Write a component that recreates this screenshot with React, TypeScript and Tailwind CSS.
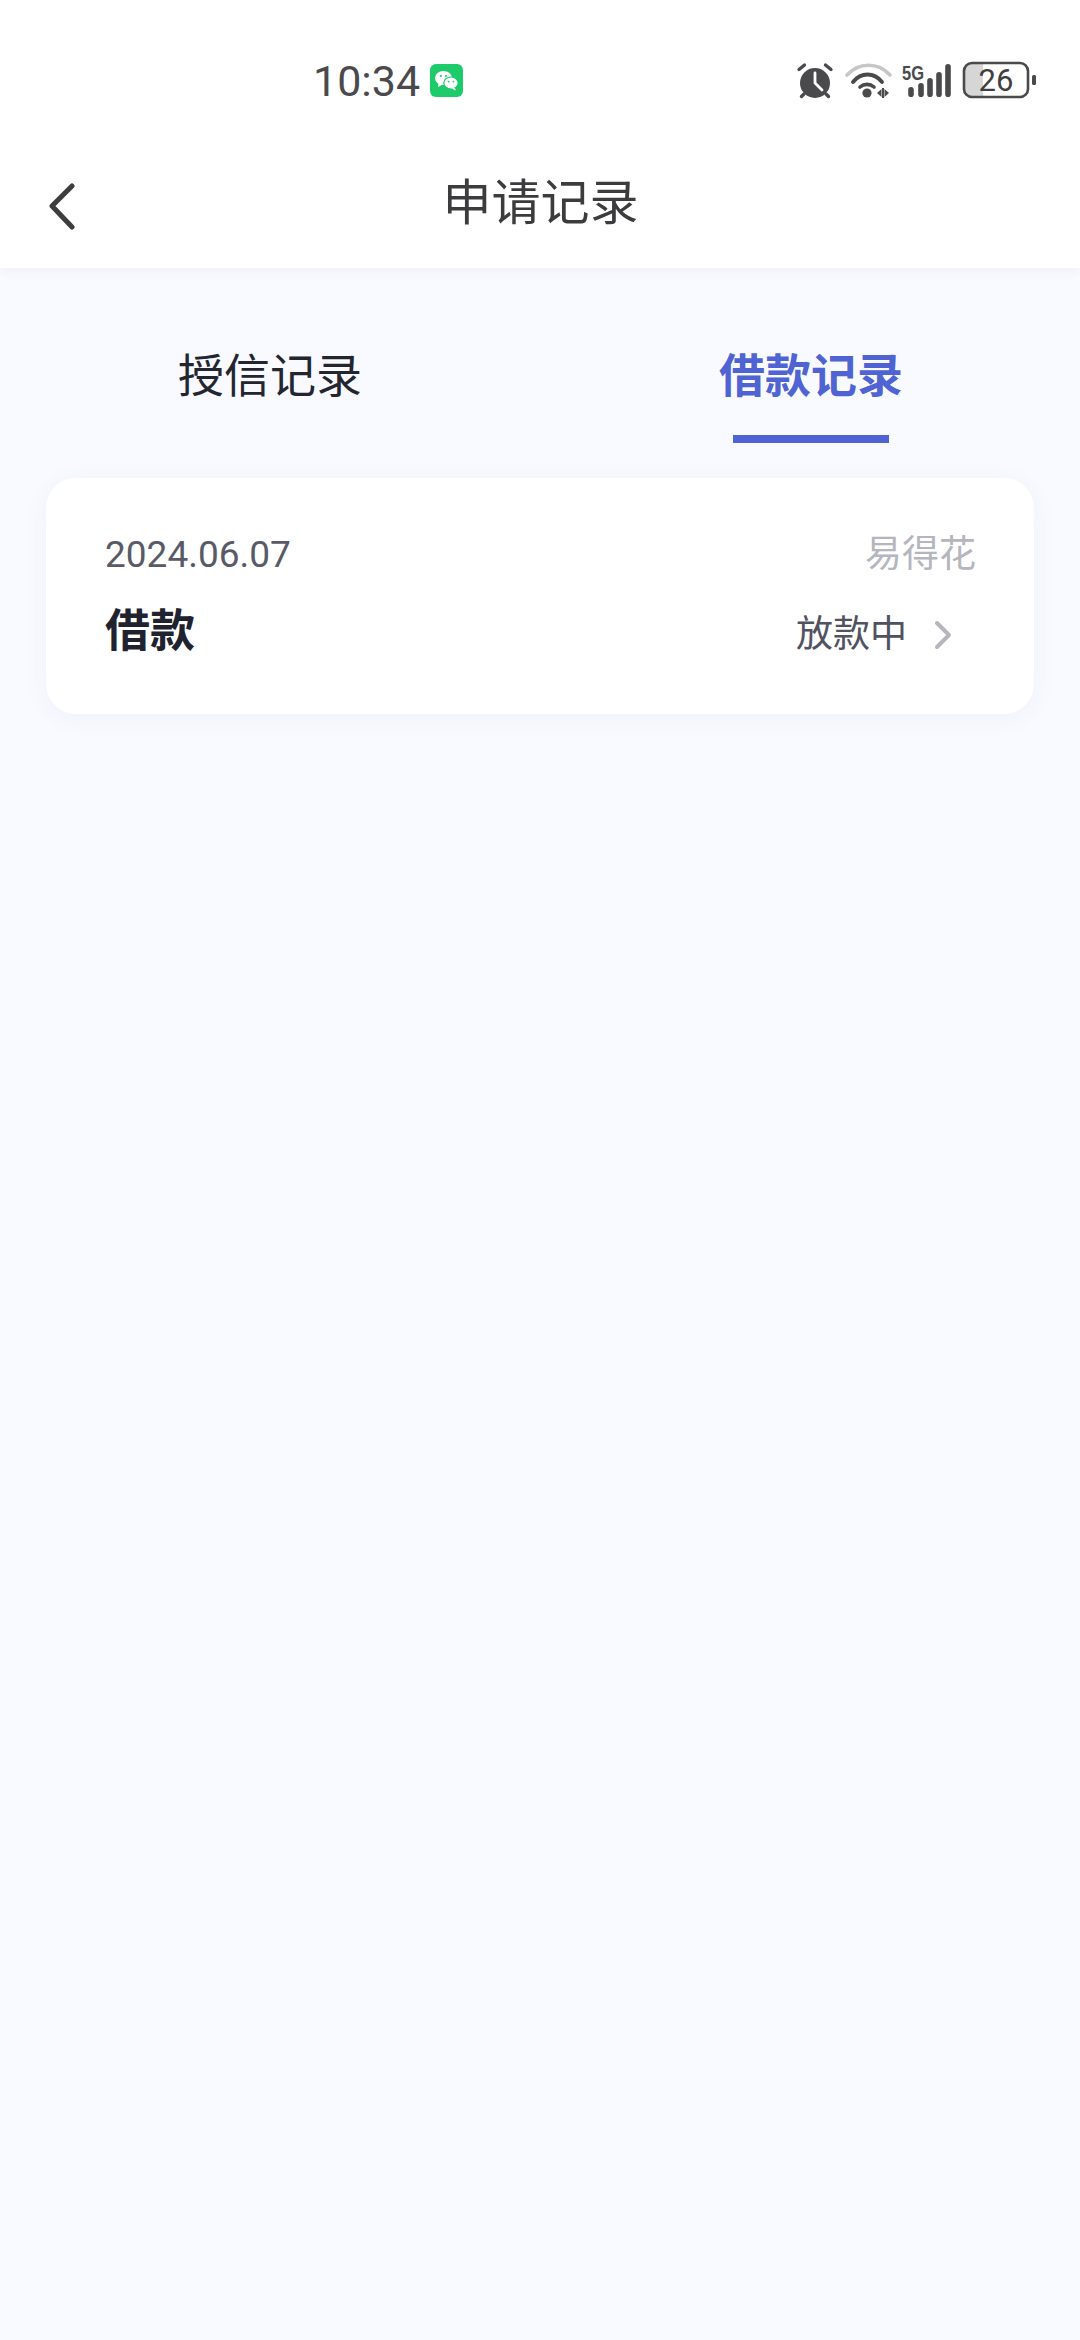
const cjk = "font-['Roboto','Noto_Sans_CJK_SC',sans-serif]";

function WeChat() {
  return (
    <svg width="33" height="33" viewBox="0 0 33 33" className="ml-[10px]">
      <rect width="33" height="33" rx="6" fill="#1ECB6B" />
      <ellipse cx="13.5" cy="14" rx="8.5" ry="7" fill="#fff" />
      <path d="M8.5 18.5 L8 23 L12.5 20.5Z" fill="#fff" />
      <ellipse cx="21" cy="19" rx="7.2" ry="6" fill="#fff" stroke="#1ECB6B" strokeWidth="1.2" />
      <path d="M24.5 23.5 L26 26.5 L21.5 24.5Z" fill="#fff" />
      <circle cx="10.8" cy="12" r="1.1" fill="#1ECB6B" />
      <circle cx="16" cy="12" r="1.1" fill="#1ECB6B" />
      <circle cx="18.6" cy="17.6" r="0.9" fill="#1ECB6B" />
      <circle cx="23.4" cy="17.6" r="0.9" fill="#1ECB6B" />
    </svg>
  );
}

function StatusIcons() {
  return (
    <svg width="244" height="44" viewBox="0 0 244 44" className="ml-auto">
      {/* alarm */}
      <circle cx="22" cy="25" r="15" fill="#4a4a4c" />
      <path d="M6 11.5 L11.5 7 M38 11.5 L32.5 7 M11 36 L8.5 38.5 M33 36 L35.5 38.5" stroke="#4a4a4c" strokeWidth="3.4" fill="none" strokeLinecap="round" />
      <path d="M22 15 V25 L29 32" stroke="#fff" strokeWidth="2.8" fill="none" strokeLinecap="round" strokeLinejoin="round" />
      {/* wifi */}
      <path d="M54 17 C66 4 85 4 97 17" stroke="#c6c6c7" strokeWidth="3.6" fill="none" strokeLinecap="round" />
      <path d="M60 24 C68 14 81 14 89 24" stroke="#4a4a4c" strokeWidth="3.8" fill="none" strokeLinecap="round" />
      <path d="M67 29 C71 25.5 77 25.5 81 29" stroke="#4a4a4c" strokeWidth="3.6" fill="none" strokeLinecap="round" />
      <circle cx="74" cy="35" r="4.6" fill="#4a4a4c" />
      <path d="M84 35 L88.5 31 V39Z M91.5 31 L96 35 L91.5 39Z" fill="#4a4a4c" />
      <rect x="89" y="30" width="2" height="10" fill="#4a4a4c" />
      {/* 5G */}
      <text x="109" y="22" fontFamily="'Liberation Sans',sans-serif" fontWeight="700" fontSize="20" fill="#4a4a4c" textLength="22" lengthAdjust="spacingAndGlyphs">5G</text>
      {/* signal */}
      <g fill="#4a4a4c">
        <rect x="115.2" y="29" width="5.6" height="10" rx="2.8" />
        <rect x="125.2" y="25" width="5.6" height="14" rx="2.8" />
        <rect x="134.2" y="20" width="5.6" height="19" rx="2.8" />
        <rect x="143.2" y="14" width="5.6" height="25" rx="2.8" />
        <rect x="152.2" y="6" width="5.6" height="33" rx="2.8" />
      </g>
      {/* battery */}
      <path d="M179 5 H190 V39 H179 A8 8 0 0 1 171 31 V13 A8 8 0 0 1 179 5Z" fill="#d6d6d7" />
      <rect x="171" y="5" width="64" height="34" rx="8" fill="none" stroke="#4a4a4c" strokeWidth="2.6" />
      <rect x="239" y="17" width="4" height="10" rx="1.5" fill="#4a4a4c" />
      <text x="203" y="33" textAnchor="middle" fontFamily="Roboto,sans-serif" fontSize="31" fill="#3f3f41">26</text>
    </svg>
  );
}

export default function App() {
  return (
    <div className={`${cjk} w-[1080px] h-[2340px] bg-[#f9faff] flex flex-col overflow-hidden`}>
      <header className="bg-white h-[268px] shrink-0 shadow-[0_2px_12px_rgba(40,40,80,0.05)] flex flex-col">
        <div className="h-[160px] flex items-center pl-[313px] pr-[43px] shrink-0">
          <div className="flex items-center">
            <span className="text-[43px] leading-none text-[#4a4a4c] mt-[2px]">10:34</span>
            <WeChat />
          </div>
          <StatusIcons />
        </div>
        <div className="relative flex-1 flex items-start justify-center">
          <svg width="30" height="48" viewBox="0 0 30 48" className="absolute left-[47px] top-[22px]">
            <path d="M25 4 L5 24 L25 45" fill="none" stroke="#3d3d3f" strokeWidth="5" strokeLinecap="round" strokeLinejoin="round" />
          </svg>
          <h1 className="text-[49px] leading-[60px] font-normal text-[#3c3c3e] mt-[14px] ml-[1px]">申请记录</h1>
        </div>
      </header>

      <nav className="grid grid-cols-2 pt-[80px] shrink-0">
        <div className="flex flex-col items-center">
          <span className="text-[46px] leading-[56px] text-[#23262f]">授信记录</span>
        </div>
        <div className="flex flex-col items-center">
          <span className="text-[46px] leading-[56px] font-bold text-[#4f63d2] ml-[2px]">借款记录</span>
          <span className="w-[156px] h-[8px] bg-[#4f63d2] mt-[31px] ml-[2px]" />
        </div>
      </nav>

      <main className="px-[46px] pt-[35px]">
        <section className="bg-white rounded-[30px] h-[236px] w-[988px] pl-[59px] pr-[59px] pt-[52px] shadow-[0_4px_24px_rgba(70,80,160,0.05)]">
          <div className="flex items-center justify-between h-[50px]">
            <span className="text-[37px] leading-[50px] text-[#595a67]">2024.06.07</span>
            <span className="text-[37px] leading-[50px] text-[#b4b5bd] mr-[-1px]">易得花</span>
          </div>
          <div className="flex items-center justify-between h-[56px] mt-[25px]">
            <span className="text-[45px] leading-[56px] font-bold text-[#1f2330] mt-[-3px]">借款</span>
            <span className="flex items-center mt-[3px]">
              <span className="text-[37px] leading-[50px] text-[#51525f]">放款中</span>
              <svg width="20" height="30" viewBox="0 0 20 30" className="ml-[26px] mr-[22px]">
                <path d="M4 3 L16 15 L4 27" fill="none" stroke="#b5b5bb" strokeWidth="4" strokeLinecap="round" strokeLinejoin="round" />
              </svg>
            </span>
          </div>
        </section>
      </main>
    </div>
  );
}
